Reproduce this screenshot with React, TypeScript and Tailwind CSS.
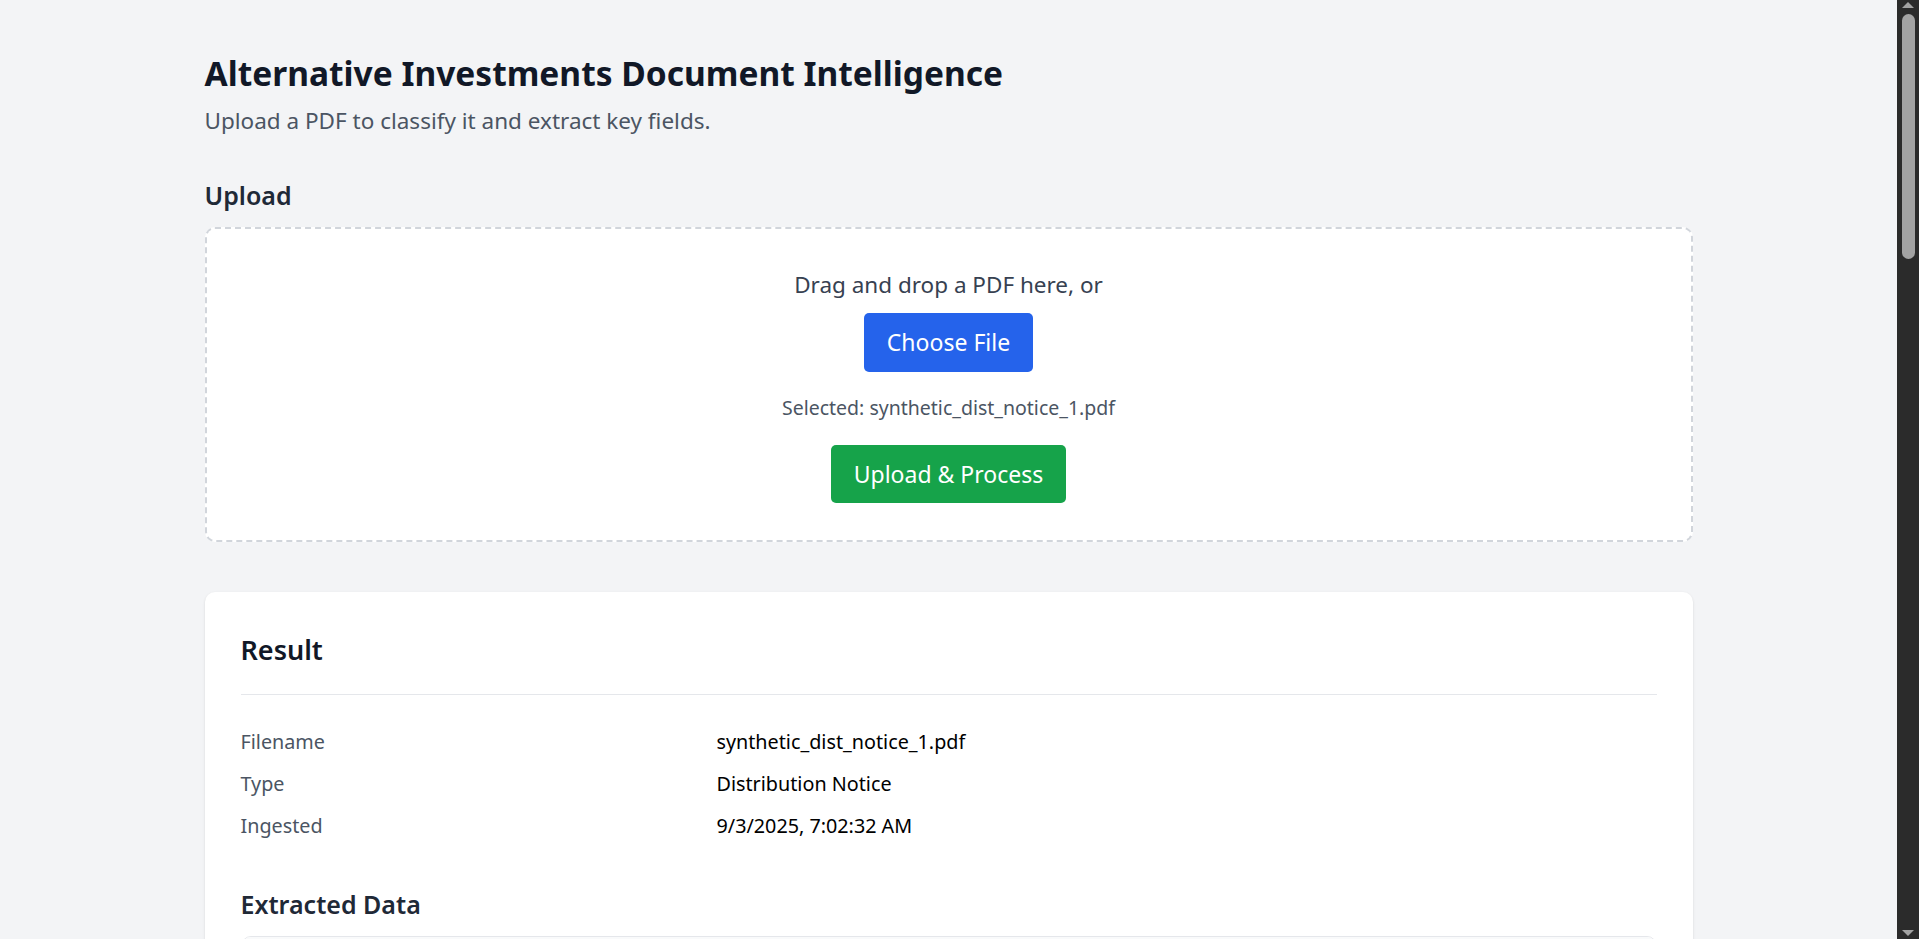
import React from 'react';

const fields: [string, string][] = [
  ['Fund Name', 'Evergreen Private Equity Fund III, L.P.'],
  ['Investor', 'Northbridge Pension Trust'],
  ['Distribution Date', '2025-08-15'],
  ['Distribution Amount', '$1,250,000.00'],
  ['Return of Capital', '$800,000.00'],
  ['Realized Gain', '$450,000.00'],
  ['Currency', 'USD'],
  ['Confidence', '0.94'],
];

const rawJson = `{
  "filename": "synthetic_dist_notice_1.pdf",
  "doc_type": "Distribution Notice",
  "fields": {
    "fund_name": "Evergreen Private Equity Fund III, L.P.",
    "investor": "Northbridge Pension Trust",
    "distribution_date": "2025-08-15",
    "distribution_amount": 1250000.0,
    "return_of_capital": 800000.0,
    "realized_gain": 450000.0,
    "currency": "USD"
  },
  "confidence": 0.94
}`;

// fake browser scrollbar, as in the screenshot
const ScrollBar = () => (
  <aside className="w-[22px] shrink-0 bg-[#2b2b2b] flex flex-col items-center">
    <svg width="14" height="8" viewBox="0 0 14 8" className="mt-[1px]">
      <polygon points="7,1 13,7 1,7" fill="#a3a3a3" />
    </svg>
    <div className="mt-[5px] h-[245px] w-[13px] rounded-full bg-[#a3a3a3]" />
    <div className="flex-1" />
    <svg width="14" height="8" viewBox="0 0 14 8" className="mb-[2px]">
      <polygon points="1,1 13,1 7,7" fill="#a3a3a3" />
    </svg>
  </aside>
);

export default function App() {
  return (
    <div className="h-screen flex overflow-hidden bg-[#f3f4f6] font-['Noto_Sans',sans-serif]">
      <div className="flex-1 overflow-y-auto [scrollbar-width:none]">
        <main className="mx-auto max-w-[1488px] pt-[50px] pb-[80px]">
          <h1 className="text-[33.5px] leading-[46px] font-bold text-[#111827]">
            Alternative Investments Document Intelligence
          </h1>
          <p className="mt-[10px] text-[22.5px] leading-[30px] text-[#4b5563]">
            Upload a PDF to classify it and extract key fields.
          </p>

          <section className="mt-[41px]">
            <h2 className="text-[25px] leading-[36px] font-semibold text-[#1f2937]">Upload</h2>
            <div className="mt-[14px] bg-white border-2 border-dashed border-[#d1d5db] rounded-[10px] pt-[41px] pb-[37px] flex flex-col items-center">
              <p className="text-[22.5px] leading-[30px] text-[#374151]">Drag and drop a PDF here, or</p>
              <button className="mt-[13px] h-[59px] px-[23px] rounded-[5px] bg-[#2563eb] text-white text-[23px]">
                Choose File
              </button>
              <p className="mt-[23px] text-[19.5px] leading-[26px] text-[#4b5563]">
                Selected: synthetic_dist_notice_1.pdf
              </p>
              <button className="mt-[24px] h-[58px] px-[23px] rounded-[5px] bg-[#16a34a] text-white text-[23px]">
                Upload &amp; Process
              </button>
            </div>
          </section>

          <section className="mt-[50px] bg-white rounded-[10px] shadow-sm px-[36px] pt-[36px] pb-[40px]">
            <h2 className="text-[27px] leading-[44px] font-semibold text-[#111827] pb-[22px] border-b border-[#e5e7eb]">
              Result
            </h2>
            <dl className="mt-[32px] grid grid-cols-[476px_1fr] gap-y-[12px] text-[19.75px] leading-[30px]">
              <dt className="text-[#4b5563]">Filename</dt>
              <dd className="text-black">synthetic_dist_notice_1.pdf</dd>
              <dt className="text-[#4b5563]">Type</dt>
              <dd className="text-black">Distribution Notice</dd>
              <dt className="text-[#4b5563]">Ingested</dt>
              <dd className="text-black">9/3/2025, 7:02:32 AM</dd>
            </dl>

            <h3 className="mt-[45px] text-[25px] leading-[36px] font-semibold text-[#1f2937]">Extracted Data</h3>
            <div className="mt-[14px] border border-[#e5e7eb] rounded-[10px] overflow-hidden">
              <table className="w-full text-[19px]">
                <thead className="bg-[#f9fafb] text-left text-[#4b5563]">
                  <tr>
                    <th className="px-[20px] py-[14px] font-semibold">Field</th>
                    <th className="px-[20px] py-[14px] font-semibold">Value</th>
                  </tr>
                </thead>
                <tbody>
                  {fields.map(([k, v]) => (
                    <tr key={k} className="border-t border-[#e5e7eb]">
                      <td className="px-[20px] py-[14px] text-[#4b5563] w-[440px]">{k}</td>
                      <td className="px-[20px] py-[14px] text-black">{v}</td>
                    </tr>
                  ))}
                </tbody>
              </table>
            </div>

            <h3 className="mt-[45px] text-[25px] leading-[36px] font-semibold text-[#1f2937]">Raw Response</h3>
            <pre className="mt-[14px] bg-[#111827] text-[#e5e7eb] rounded-[10px] p-[24px] text-[16px] leading-[26px] font-['Liberation_Mono',monospace] overflow-x-auto">
              {rawJson}
            </pre>
          </section>

          <section className="mt-[50px] bg-white rounded-[10px] shadow-sm px-[36px] py-[36px]">
            <h2 className="text-[27px] leading-[44px] font-semibold text-[#111827] pb-[22px] border-b border-[#e5e7eb]">
              Recent Documents
            </h2>
            <ul className="mt-[20px] flex flex-col gap-[12px] text-[19px] leading-[30px]">
              {['synthetic_dist_notice_1.pdf', 'capital_call_q2.pdf', 'quarterly_report_2025q2.pdf', 'k1_statement_2024.pdf', 'nav_statement_jul.pdf', 'subscription_agreement.pdf'].map((f) => (
                <li key={f} className="flex justify-between border-b border-[#f3f4f6] pb-[12px]">
                  <span className="text-black">{f}</span>
                  <span className="text-[#4b5563]">9/3/2025</span>
                </li>
              ))}
            </ul>
          </section>
        </main>
      </div>
      <ScrollBar />
    </div>
  );
}
